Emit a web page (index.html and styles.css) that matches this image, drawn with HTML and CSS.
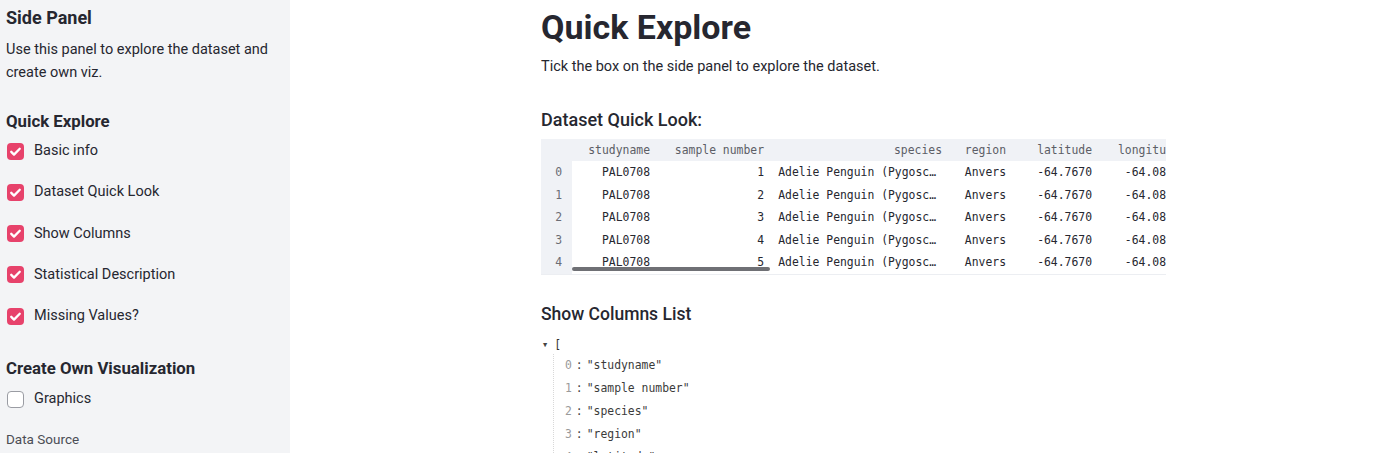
FILE: index.html
```html
<!DOCTYPE html>
<html>
<head>
<meta charset="utf-8">
<link rel="stylesheet" href="styles.css">
</head>
<body>
<div class="app">
  <aside class="sidebar">
    <h2 class="side-title">Side Panel</h2>
    <p class="side-text">Use this panel to explore the dataset and create own viz.</p>
    <h3 class="side-head">Quick Explore</h3>
    <div class="checks">
      <label class="check"><span class="box on"><svg viewBox="0 0 16 16"><path d="M4 8.3l2.6 2.6L12 5.4" fill="none" stroke="#fff" stroke-width="2.2" stroke-linecap="round" stroke-linejoin="round"/></svg></span>Basic info</label>
      <label class="check"><span class="box on"><svg viewBox="0 0 16 16"><path d="M4 8.3l2.6 2.6L12 5.4" fill="none" stroke="#fff" stroke-width="2.2" stroke-linecap="round" stroke-linejoin="round"/></svg></span>Dataset Quick Look</label>
      <label class="check"><span class="box on"><svg viewBox="0 0 16 16"><path d="M4 8.3l2.6 2.6L12 5.4" fill="none" stroke="#fff" stroke-width="2.2" stroke-linecap="round" stroke-linejoin="round"/></svg></span>Show Columns</label>
      <label class="check"><span class="box on"><svg viewBox="0 0 16 16"><path d="M4 8.3l2.6 2.6L12 5.4" fill="none" stroke="#fff" stroke-width="2.2" stroke-linecap="round" stroke-linejoin="round"/></svg></span>Statistical Description</label>
      <label class="check"><span class="box on"><svg viewBox="0 0 16 16"><path d="M4 8.3l2.6 2.6L12 5.4" fill="none" stroke="#fff" stroke-width="2.2" stroke-linecap="round" stroke-linejoin="round"/></svg></span>Missing Values?</label>
    </div>
    <h3 class="side-head second">Create Own Visualization</h3>
    <label class="check"><span class="box off"></span>Graphics</label>
    <div class="small-label">Data Source</div>
  </aside>
  <main class="main">
    <div class="content">
      <h1 class="title">Quick Explore</h1>
      <p class="lead">Tick the box on the side panel to explore the dataset.</p>
      <h3 class="sub">Dataset Quick Look:</h3>
      <div class="table">
        <div class="row head">
          <span class="c idx"></span><span class="c c1">studyname</span><span class="c c2">sample number</span><span class="c c3">species</span><span class="c c4">region</span><span class="c c5">latitude</span><span class="c c6">longitu</span>
        </div>
        <div class="row"><span class="c idx">0</span><span class="c c1">PAL0708</span><span class="c c2">1</span><span class="c c3">Adelie Penguin (Pygosc…</span><span class="c c4">Anvers</span><span class="c c5">-64.7670</span><span class="c c6">-64.08</span></div>
        <div class="row"><span class="c idx">1</span><span class="c c1">PAL0708</span><span class="c c2">2</span><span class="c c3">Adelie Penguin (Pygosc…</span><span class="c c4">Anvers</span><span class="c c5">-64.7670</span><span class="c c6">-64.08</span></div>
        <div class="row"><span class="c idx">2</span><span class="c c1">PAL0708</span><span class="c c2">3</span><span class="c c3">Adelie Penguin (Pygosc…</span><span class="c c4">Anvers</span><span class="c c5">-64.7670</span><span class="c c6">-64.08</span></div>
        <div class="row"><span class="c idx">3</span><span class="c c1">PAL0708</span><span class="c c2">4</span><span class="c c3">Adelie Penguin (Pygosc…</span><span class="c c4">Anvers</span><span class="c c5">-64.7670</span><span class="c c6">-64.08</span></div>
        <div class="row"><span class="c idx">4</span><span class="c c1">PAL0708</span><span class="c c2">5</span><span class="c c3">Adelie Penguin (Pygosc…</span><span class="c c4">Anvers</span><span class="c c5">-64.7670</span><span class="c c6">-64.08</span></div>
        <div class="scrollbar"></div>
      </div>
      <h3 class="sub sub2">Show Columns List</h3>
      <div class="json">
        <div class="jopen"><span class="caret">▼</span>[</div>
        <div class="jitems">
          <div class="jrow"><span class="jk">0</span><span class="jc">:</span><span class="js">"studyname"</span></div>
          <div class="jrow"><span class="jk">1</span><span class="jc">:</span><span class="js">"sample number"</span></div>
          <div class="jrow"><span class="jk">2</span><span class="jc">:</span><span class="js">"species"</span></div>
          <div class="jrow"><span class="jk">3</span><span class="jc">:</span><span class="js">"region"</span></div>
          <div class="jrow"><span class="jk">4</span><span class="jc">:</span><span class="js">"latitude"</span></div>
        </div>
      </div>
    </div>
  </main>
</div>
</body>
</html>
```
FILE: styles.css
```css
html, body {
  margin: 0;
  padding: 0;
  height: 100%;
  overflow: hidden;
  background: #fff;
  font-family: Roboto, "Noto Sans", sans-serif;
  color: #262730;
}
.app {
  display: flex;
  height: 453px;
}
.sidebar {
  width: 290px;
  flex: none;
  background: #f3f4f6;
  padding: 6px 12px 0 6px;
  box-sizing: border-box;
}
.side-title {
  margin: 0;
  font-size: 18px;
  font-weight: 700;
  line-height: 24px;
}
.side-text {
  margin: 8px 0 0;
  font-size: 14.5px;
  line-height: 23px;
}
.side-head {
  margin: 26px 0 0;
  font-size: 16.8px;
  font-weight: 700;
  line-height: 22px;
}
.side-head.second {
  margin-top: 30px;
}
.checks {
  display: flex;
  flex-direction: column;
  gap: 19.25px;
  margin-top: 8px;
}
.check {
  display: flex;
  align-items: center;
  gap: 10px;
  font-size: 14.5px;
  line-height: 22px;
  padding-left: 1px;
}
.sidebar > .check {
  margin-top: 9px;
}
.box {
  width: 17px;
  height: 17px;
  border-radius: 4px;
  box-sizing: border-box;
  display: inline-flex;
  flex: none;
}
.box.on {
  background: #e7426b;
}
.box.on svg {
  width: 17px;
  height: 17px;
}
.box.off {
  background: #fff;
  border: 1px solid #9a9ca3;
}
.small-label {
  margin-top: 20px;
  font-size: 13.5px;
  color: #4b4d55;
  line-height: 18px;
}
.main {
  flex: 1;
  min-width: 0;
  padding-left: 251px;
}
.content {
  width: 625px;
}
.title {
  margin: 6px 0 0;
  font-size: 34px;
  font-weight: 700;
  line-height: 42px;
}
.lead {
  margin: 8px 0 0;
  font-size: 14.5px;
  line-height: 22px;
}
.sub {
  margin: 29px 0 0;
  font-size: 18px;
  font-weight: 500;
  line-height: 26px;
}
.sub2 {
  margin-top: 26px;
  font-size: 17.5px;
}
.table {
  margin-top: 6px;
  width: 625px;
  overflow: hidden;
  position: relative;
  font-family: "DejaVu Sans Mono", "Liberation Mono", monospace;
  font-size: 11.4px;
  color: #262730;
  background: #fff;
  border-bottom: 1px solid #eceef2;
}
.row {
  display: flex;
  height: 22.5px;
  align-items: center;
  white-space: nowrap;
}
.row.head {
  background: #f0f2f6;
  height: 22px;
  color: #5c5e66;
}
.c {
  flex: none;
  text-align: right;
  padding: 0 7px;
  box-sizing: border-box;
}
.idx {
  width: 31px;
  background: #f0f2f6;
  color: #6b6d75;
  padding-right: 10px;
  align-self: stretch;
  display: flex;
  align-items: center;
  justify-content: flex-end;
}
.row.head .idx { background: transparent; }
.c1 { width: 85px; }
.c2 { width: 114px; }
.c3 { width: 178px; padding-right: 13px; }
.row.head .c3 { padding-right: 7px; }
.c4 { width: 64px; }
.c5 { width: 86px; }
.c6 { width: 67px; padding-right: 0; }
.scrollbar {
  position: absolute;
  left: 31px;
  bottom: 3px;
  width: 198px;
  height: 4px;
  border-radius: 2px;
  background: #6f7075;
}
.json {
  margin-top: 9px;
  font-family: "DejaVu Sans Mono", "Liberation Mono", monospace;
  font-size: 11.4px;
  color: #333;
}
.jopen {
  display: flex;
  align-items: center;
  gap: 7px;
  line-height: 18px;
  padding-left: 2px;
}
.caret {
  font-size: 7px;
  color: #444;
}
.jitems {
  margin-left: 12px;
  border-left: 1px dotted #d8d8d8;
  padding-left: 11px;
}
.jrow {
  line-height: 23px;
  display: flex;
  gap: 4px;
}
.jk { color: #9a9a9a; }
.jc { color: #444; }
.js { color: #3b3b3b; }
```
